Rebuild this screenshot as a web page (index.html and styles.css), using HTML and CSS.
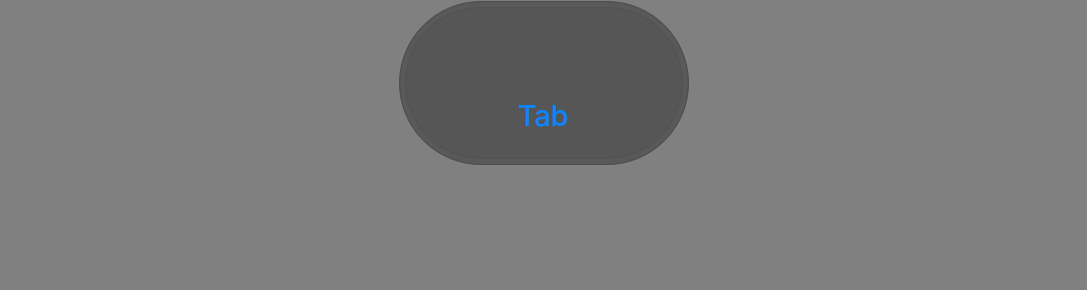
FILE: index.html
```html
<!DOCTYPE html>
<html lang="en">
  <head>
    <meta charset="UTF-8" />
    <meta name="viewport" content="width=device-width, initial-scale=1.0" />
    <title>Tab</title>
    <link rel="stylesheet" href="styles.css">
  </head>
  <body>
    <div class="stage">
      <div class="tab-pill">
        <span class="tab-label">Tab</span>
      </div>
    </div>
  </body>
</html>
```

FILE: styles.css
```css
* {
  margin: 0;
  padding: 0;
  box-sizing: border-box;
}

body {
  background-color: #808080;
  font-family: Inter, "Noto Sans", sans-serif;
  height: 290px;
}

.stage {
  display: flex;
  justify-content: center;
  padding-top: 1px;
}

.tab-pill {
  width: 290px;
  height: 164px;
  border-radius: 82px;
  background-color: #565656;
  border: 1px solid #4c4c4c;
  box-shadow: inset 0 0 0 5px #595959, inset 0 0 1px 6px #535353;
  display: flex;
  flex-direction: column;
  justify-content: flex-end;
  align-items: center;
  padding-bottom: 30px;
}

.tab-label {
  color: #0a84ff;
  font-size: 29px;
  font-weight: 500;
  letter-spacing: -0.3px;
  line-height: 36px;
}
```
